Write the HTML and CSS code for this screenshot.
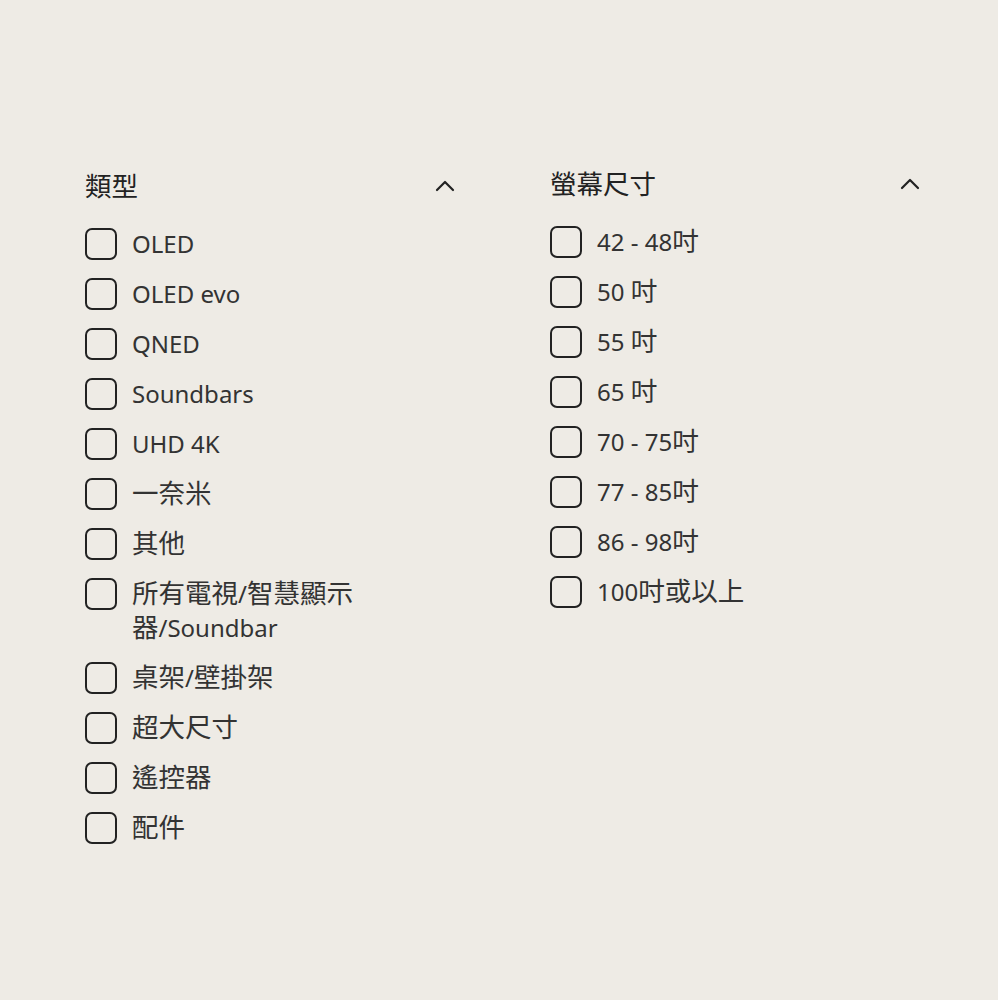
FILE: index.html
```html
<!DOCTYPE html>
<html lang="zh-Hant">
<head>
<meta charset="utf-8">
<title>Filters</title>
<link rel="stylesheet" href="styles.css">
</head>
<body>
<div class="filters">
  <section class="group group-type">
    <div class="group-head">
      <h2 class="group-title">類型</h2>
      <svg class="chev" width="20" height="12" viewBox="0 0 20 12"><path d="M2 10 L10 2 L18 10" fill="none" stroke="#222" stroke-width="2.2" stroke-linecap="round" stroke-linejoin="round"/></svg>
    </div>
    <ul class="opts">
      <li class="opt"><span class="box"></span><span class="lbl">OLED</span></li>
      <li class="opt"><span class="box"></span><span class="lbl">OLED evo</span></li>
      <li class="opt"><span class="box"></span><span class="lbl">QNED</span></li>
      <li class="opt"><span class="box"></span><span class="lbl">Soundbars</span></li>
      <li class="opt"><span class="box"></span><span class="lbl">UHD 4K</span></li>
      <li class="opt"><span class="box"></span><span class="lbl"><span class="cjk">一奈米</span></span></li>
      <li class="opt"><span class="box"></span><span class="lbl"><span class="cjk">其他</span></span></li>
      <li class="opt"><span class="box"></span><span class="lbl"><span class="cjk">所有電視</span>/<span class="cjk">智慧顯示器</span>/Soundbar</span></li>
      <li class="opt"><span class="box"></span><span class="lbl"><span class="cjk">桌架</span>/<span class="cjk">壁掛架</span></span></li>
      <li class="opt"><span class="box"></span><span class="lbl"><span class="cjk">超大尺寸</span></span></li>
      <li class="opt"><span class="box"></span><span class="lbl"><span class="cjk">遙控器</span></span></li>
      <li class="opt"><span class="box"></span><span class="lbl"><span class="cjk">配件</span></span></li>
    </ul>
  </section>
  <section class="group group-size">
    <div class="group-head">
      <h2 class="group-title">螢幕尺寸</h2>
      <svg class="chev" width="20" height="12" viewBox="0 0 20 12"><path d="M2 10 L10 2 L18 10" fill="none" stroke="#222" stroke-width="2.2" stroke-linecap="round" stroke-linejoin="round"/></svg>
    </div>
    <ul class="opts">
      <li class="opt"><span class="box"></span><span class="lbl">42 - 48<span class="cjk">吋</span></span></li>
      <li class="opt"><span class="box"></span><span class="lbl">50 <span class="cjk">吋</span></span></li>
      <li class="opt"><span class="box"></span><span class="lbl">55 <span class="cjk">吋</span></span></li>
      <li class="opt"><span class="box"></span><span class="lbl">65 <span class="cjk">吋</span></span></li>
      <li class="opt"><span class="box"></span><span class="lbl">70 - 75<span class="cjk">吋</span></span></li>
      <li class="opt"><span class="box"></span><span class="lbl">77 - 85<span class="cjk">吋</span></span></li>
      <li class="opt"><span class="box"></span><span class="lbl">86 - 98<span class="cjk">吋</span></span></li>
      <li class="opt"><span class="box"></span><span class="lbl">100<span class="cjk">吋或以上</span></span></li>
    </ul>
  </section>
</div>
</body>
</html>
```
FILE: styles.css
```css
html, body {
  margin: 0;
  padding: 0;
  background: #eeebe5;
}
body {
  font-family: "Noto Sans", "Noto Sans CJK TC", sans-serif;
  color: #333;
  width: 998px;
  height: 1000px;
}
.filters {
  display: grid;
  grid-template-columns: 372px 372px;
  column-gap: 93px;
  align-items: start;
  padding: 165px 0 0 85px;
}
.group-type {
  padding-top: 2px;
}
.group-head {
  display: flex;
  align-items: center;
  justify-content: space-between;
  height: 36px;
  padding-right: 2px;
}
.group-title {
  margin: 0;
  font-family: "Noto Sans CJK TC", sans-serif;
  font-size: 26.5px;
  font-weight: 400;
  line-height: 36px;
  color: #222;
}
.chev {
  display: block;
  margin-top: 2px;
}
.opts {
  list-style: none;
  margin: 24px 0 0 0;
  padding: 0;
  display: flex;
  flex-direction: column;
  gap: 16px;
}
.opt {
  display: flex;
  align-items: flex-start;
  gap: 15px;
}
.box {
  flex: 0 0 auto;
  width: 28px;
  height: 28px;
  border: 2px solid #222;
  border-radius: 7px;
  margin-top: 1px;
}
.lbl {
  display: block;
  font-size: 24px;
  line-height: 34px;
  max-width: 240px;
  color: #333;
}
.cjk {
  font-family: "Noto Sans CJK TC", sans-serif;
  font-size: 26.5px;
  line-height: 1;
}
```
